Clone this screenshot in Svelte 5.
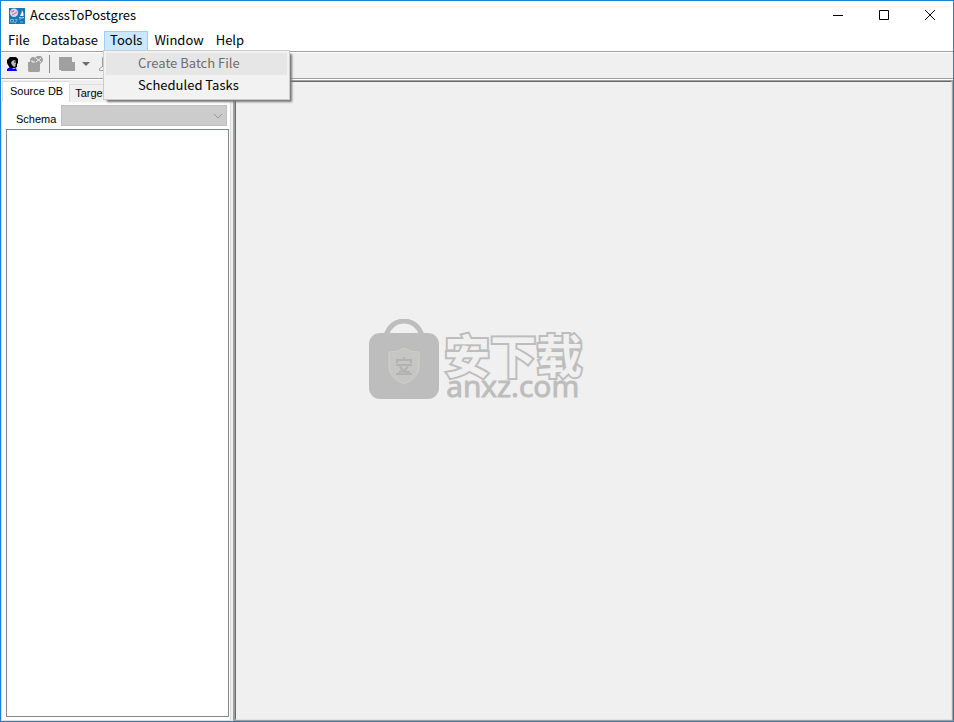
<script>
  const menus = ['File', 'Database', 'Tools', 'Window', 'Help'];
  let open = $state('Tools');
  let tab = $state('Source DB');
</script>

<div class="window">
  <header class="titlebar">
    <svg class="logo" width="16" height="16" viewBox="0 0 16 16" aria-hidden="true">
      <rect width="16" height="16" fill="#1976b4" />
      <circle cx="5" cy="4.8" r="4.2" fill="#ddd3e6" />
      <path d="M2 3l2 1 1-2M5 6l3-2M3 7l2-1" stroke="#b66aa5" fill="none" />
      <path d="M13 2q2 3 1.500 6H11q2-3 2-6" fill="#fff" />
      <path d="M10 9.500q3 1 5 0" stroke="#c8e2f4" fill="none" />
      <path d="M1.500 11.500h3v2.500h-3zM6 11.500q3-1 2 1t-2 2M10 11h2m-1 3h3M5 14l2 1" stroke="#79b7df" fill="none" />
    </svg>
    <h1>AccessToPostgres</h1>
    <div class="controls">
      <button aria-label="Minimize"><svg width="12" height="12" viewBox="0 0 12 12"><path d="M1 5.500h10" /></svg></button>
      <button aria-label="Maximize"><svg width="12" height="12" viewBox="0 0 12 12"><path d="M1.500 .5h9v9h-9z" /></svg></button>
      <button aria-label="Close"><svg width="12" height="12" viewBox="0 0 12 12"><path d="M1 0l10 10M11 0L1 10" /></svg></button>
    </div>
  </header>

  <nav class="menubar">
    {#each menus as name}
      <div class="menu">
        <button class:active={open === name} onclick={() => (open = open === name ? '' : name)}>{name}</button>
        {#if name === 'Tools' && open === 'Tools'}
          <div class="popup">
            <button class="hover" disabled>Create Batch File</button>
            <button>Scheduled Tasks</button>
          </div>
        {/if}
      </div>
    {/each}
  </nav>

  <div class="toolbar">
    <button aria-label="Connect">
      <svg width="12" height="14" viewBox="0 0 12 14">
        <path d="M3 0h6l2 2v4l-1 1v3l-2 1H3L1 8 0 6V3z" fill="#000" />
        <path d="M5 4l2-1 2 1v5l-2 1-2-2-1-2z" fill="#bdbdbd" />
        <path d="M7 5h2M8 8h2" stroke="#000" />
        <path d="M0 12l3-2 4 2 2-1 1 3H0z" fill="#0000f0" />
      </svg>
    </button>
    <button aria-label="Disconnect" disabled>
      <svg width="16" height="16" viewBox="0 0 16 16">
        <path d="M0 15V6h2V3l2-2h2l1 1 2-2h4l2 3v2l-3 3v7l-1 1H1z" fill="#a0a0a0" />
        <path d="M8 2l5 4M13 2L8 6M4 4v2h3" stroke="#f0f0f0" fill="none" />
      </svg>
    </button>
    <span class="rule"></span>
    <button aria-label="New query" disabled>
      <svg width="16" height="14" viewBox="0 0 16 14"><path d="M0 0h13v5h3v9H2v-1H0z" fill="#a0a0a0" /></svg>
    </button>
    <button class="drop" aria-label="Query options">
      <svg width="8" height="4" viewBox="0 0 8 4"><path d="M0 0h8L4 4z" fill="#6d6d6d" /></svg>
    </button>
    <button aria-label="Schedule" disabled>
      <svg width="14" height="14" viewBox="0 0 14 14"><path d="M3.500 10V.5h8V10M.5 13.500v-2l3-2 3 2v2z" fill="none" stroke="#a0a0a0" /></svg>
    </button>
  </div>

  <div class="body">
    <aside>
      <div class="tabs" role="tablist">
        {#each ['Source DB', 'Target DB'] as name}
          <button role="tab" aria-selected={tab === name} onclick={() => (tab = name)}>{name}</button>
        {/each}
      </div>
      <div class="panel">
        <div class="schema">
          <label for="schema">Schema</label>
          <div class="combo">
            <select id="schema" disabled></select>
            <svg width="10" height="6" viewBox="0 0 10 6" aria-hidden="true"><path d="M1 1l4 4 4-4" fill="none" stroke="#9a9a9a" /></svg>
          </div>
        </div>
        <div class="tree"></div>
      </div>
    </aside>

    <main>
      <div class="brand">
        <svg width="72" height="82" viewBox="0 0 72 82" aria-hidden="true">
          <path d="M18 17C23-3 49-3 54 17" fill="none" stroke="#bdbdbd" stroke-width="5" />
          <rect x="1" y="14" width="70" height="66" rx="11" fill="#bdbdbd" />
          <path d="M36 29q7 5 15 4v14q0 12-15 18-15-6-15-18V33q8 1 15-4z" fill="#c6c6c4" stroke="#cfcfcd" />
          <path d="M36 38v3M29 44v-3h14v3M28 46h16M32 45q0 5 5 8h5M40 46q-1 6-9 7M28 55h16" fill="none" stroke="#b2b2b2" stroke-width="2" />
        </svg>
        <div class="words">
          <span class="cn">安下载</span>
          <span class="site">anxz.com</span>
        </div>
      </div>
    </main>
  </div>
</div>

<style>
  :global(body) { margin: 0; }
  .window {
    box-sizing: border-box;
    min-height: 100vh;
    display: flex;
    flex-direction: column;
    border: 1px solid #1883d7;
    background: #fff;
    color: #000;
    font: 13px/16px "Noto Sans CJK SC", sans-serif;
  }
  button { border: 0; padding: 0; background: none; font: inherit; color: inherit; }
  svg { display: block; }
  .titlebar { display: flex; align-items: center; height: 30px; padding-left: 8px; }
  h1 { margin: 0 0 2px 5px; font-size: 13px; font-weight: 400; }
  .controls { display: flex; margin-left: auto; }
  .controls button { width: 46px; height: 29px; display: grid; place-items: center; }
  .controls path { fill: none; stroke: #000; }
  .menubar { display: flex; height: 20px; padding-left: 1px; }
  .menu { position: relative; }
  .menu > button { box-sizing: border-box; height: 20px; padding: 0 5px 2px; border: 1px solid transparent; }
  .menu > .active { background: #cce8ff; border-color: #99d1ff; }
  .popup {
    position: absolute;
    z-index: 2;
    top: 19px;
    left: -1px;
    box-sizing: border-box;
    width: 187px;
    padding: 2px;
    border: 1px solid #ccc;
    background: #f2f2f2;
    box-shadow: 3px 3px 2px -1px #777;
  }
  .popup button { display: block; width: 100%; height: 22px; padding: 0 0 2px 32px; text-align: left; }
  .popup .hover { background: #e6e6e6; color: #6d6d6d; }
  .toolbar {
    box-sizing: border-box;
    height: 28px;
    display: flex;
    align-items: center;
    background: #f0f0f0;
    border-top: 1px solid #a0a0a0;
    border-bottom: 1px solid #a0a0a0;
    box-shadow: inset 0 1px #fff;
    padding: 0 0 2px 6px;
    gap: 9px;
  }
  .rule { width: 1px; height: 18px; background: #8c8c8c; margin-left: -4px; }
  .drop { margin-left: -2px; }
  .body { flex: 1; display: flex; background: #f0f0f0; border-top: 1px solid #fff; }
  aside { flex: 0 0 232px; display: flex; flex-direction: column; border-right: 1px solid #a0a0a0; font: 11px/14px "Liberation Sans", sans-serif; }
  .tabs { display: flex; align-items: flex-end; padding: 1px 0 0 1px; height: 21px; }
  .tabs button { box-sizing: border-box; height: 18px; padding: 0 5px 1px; border: 1px solid #dcdcdc; border-bottom: 0; white-space: nowrap; }
  .tabs [aria-selected='true'] { height: 21px; padding: 0 6px 3px 7px; background: #fff; border-right: 0; }
  .panel { flex: 1; display: flex; flex-direction: column; background: #fff; border: 1px solid #dcdcdc; border-top: 0; padding: 2px 1px 3px 4px; margin-right: 2px; }
  .schema { display: flex; align-items: center; gap: 5px; padding: 0 2px 3px 10px; }
  .schema label { padding-top: 8px; }
  .combo { position: relative; flex: 1; }
  select { appearance: none; display: block; box-sizing: border-box; width: 100%; height: 21px; border: 1px solid #bfbfbf; border-radius: 0; background: #ccc; opacity: 1; }
  .combo svg { position: absolute; right: 4px; top: 8px; }
  .tree { flex: 1; border: 1px solid #828790; }
  main {
    flex: 1;
    display: flex;
    align-items: center;
    background: #f0f0f0;
    border: 2px solid;
    border-color: #696969 #e3e3e3 #e3e3e3 #696969;
    outline: 1px solid #a0a0a0;
    outline-offset: -1px;
  }
  .brand { display: flex; margin: 0 auto 82px 18.500%; }
  .words { display: flex; flex-direction: column; color: #bdbdbd; padding: 12px 0 0 4px; }
  .cn {
    font: 700 46px/44px "Noto Sans CJK SC", sans-serif;
    color: #f0f0f0;
    -webkit-text-stroke: 4px #bdbdbd;
    paint-order: stroke fill;
    stroke-linejoin: round;
  }
  .site { font: 30px/22px "Open Sans", sans-serif; -webkit-text-stroke: 1px #bdbdbd; padding-left: 2px; }
</style>
